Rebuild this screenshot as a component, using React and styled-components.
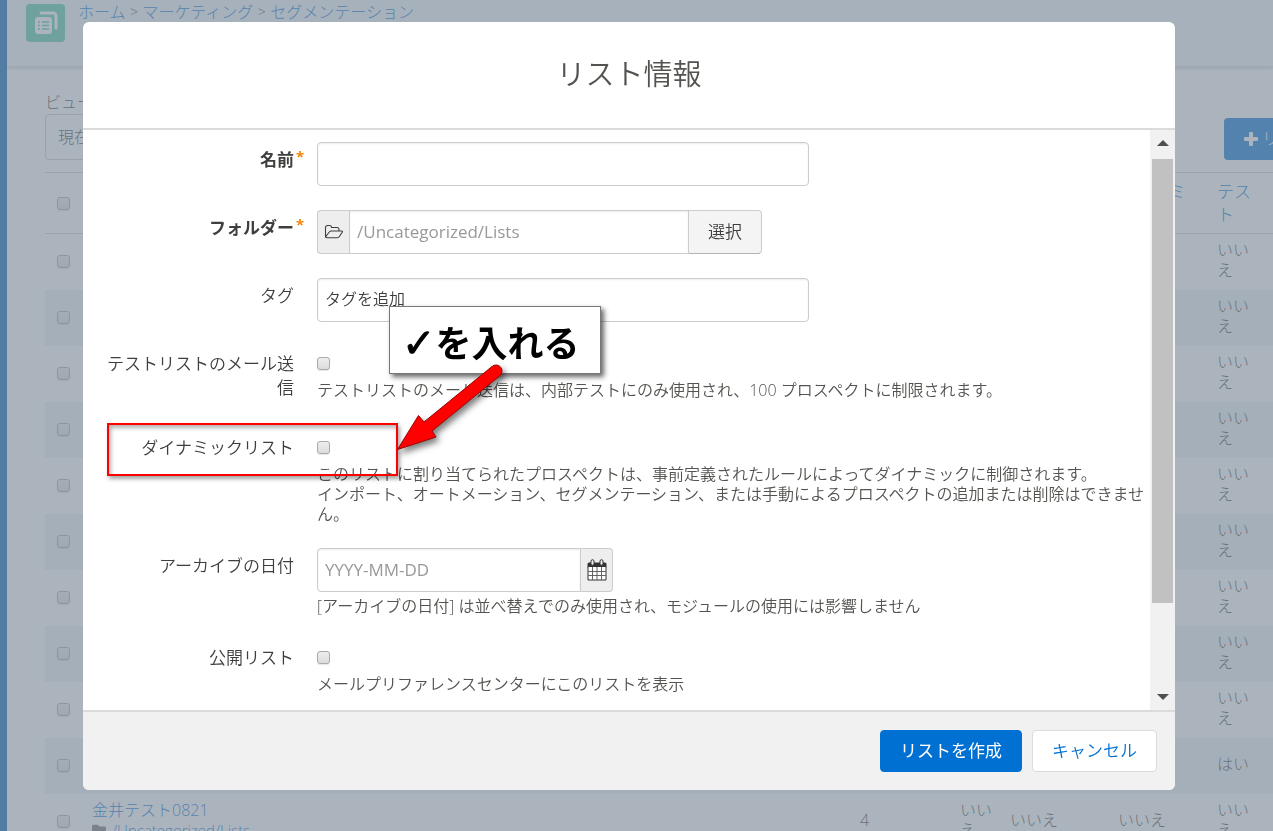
import React from 'react';
import styled, { createGlobalStyle } from 'styled-components';
import { FaFolder } from 'react-icons/fa';

const rows = [
  { test: 'いいえ' },
  { test: 'いいえ' },
  { test: 'いいえ' },
  { test: 'いいえ' },
  { test: 'いいえ' },
  { test: 'いいえ' },
  { test: 'いいえ' },
  { test: 'いいえ' },
  { test: 'いいえ' },
  { test: 'はい' },
  {
    name: '金井テスト0821',
    folder: '/Uncategorized/Lists',
    count: 4,
    crm: 'いいえ',
    open: 'いいえ',
    dynamic: 'いいえ',
    test: 'いいえ',
  },
];

const ListIcon = () => (
  <svg width="24" height="24" viewBox="0 0 24 24" aria-hidden="true">
    <path
      d="M7 2h12a3 3 0 0 1 3 3v12"
      fill="none"
      stroke="#fff"
      strokeWidth="3"
      strokeLinecap="round"
    />
    <rect x="1" y="6" width="17" height="17" rx="3" fill="#fff" />
    <path
      d="M4 11h2M4 14.5h2M4 18h2M8 11h7M8 14.5h7M8 18h7"
      stroke="#54c8a8"
      strokeWidth="1.6"
    />
  </svg>
);

const PlusIcon = () => (
  <svg width="14" height="14" viewBox="0 0 14 14" aria-hidden="true">
    <path
      d="M6 0h2a1 1 0 0 1 1 1v4h4a1 1 0 0 1 1 1v2a1 1 0 0 1-1 1H9v4a1 1 0 0 1-1 1H6a1 1 0 0 1-1-1V9H1a1 1 0 0 1-1-1V6a1 1 0 0 1 1-1h4V1a1 1 0 0 1 1-1z"
      fill="#fff"
    />
  </svg>
);

const FolderOpenIcon = () => (
  <svg width="20" height="16" viewBox="0 0 20 16" aria-hidden="true">
    <path
      d="M1.5 12.5v-9a2 2 0 0 1 2-2h2a2 2 0 0 1 2 2h5.5a2 2 0 0 1 2 2V7M1.5 13L5.3 8Q6 7 7.3 7H17.6Q19 7 18.2 8.2L15.2 12.7Q14.5 13.8 13 13.8H3Q1.5 13.8 1.5 12.5"
      fill="none"
      stroke="#3e3e3c"
      strokeWidth="1.1"
      strokeLinejoin="round"
    />
  </svg>
);

const CalendarIcon = () => (
  <svg width="20" height="22" viewBox="0 0 20 22" aria-hidden="true">
    <path d="M2 3.5h16a1.5 1.5 0 0 1 1.5 1.5v3.500h-19V5A1.500 1.500 0 0 1 2 3.500z" fill="#333" />
    <path d="M1 8v13h18V8" fill="#fff" stroke="#333" />
    <path
      d="M1 12.5h18M1 16.5h18M5.5 8v13M10 8v13M14.5 8v13"
      fill="none"
      stroke="#555"
      strokeWidth="0.9"
    />
    <rect x="4" y="0.7" width="3" height="5.5" rx="1.5" fill="#eee" stroke="#333" />
    <rect x="13" y="0.7" width="3" height="5.5" rx="1.5" fill="#eee" stroke="#333" />
  </svg>
);

const Field = ({ id, label, required, children }) => (
  <Row>
    <Label htmlFor={id} $bold={required}>
      {label}
    </Label>
    <Mark>{required && '*'}</Mark>
    <Control>{children}</Control>
  </Row>
);

const App = () => {
  return (
    <>
      <GlobalStyle />
      <Page>
        <SideBar />
        <Main>
          <PageHeader>
            <HeaderIcon>
              <ListIcon />
            </HeaderIcon>
            <Breadcrumb>
              <a href="#home">ホーム</a>
              <span>&gt;</span>
              <a href="#marketing">マーケティング</a>
              <span>&gt;</span>
              <a href="#segmentation">セグメンテーション</a>
            </Breadcrumb>
          </PageHeader>
          <Content>
            <Toolbar>
              <View>
                <label htmlFor="view">ビュー</label>
                <ViewSelect id="view">
                  <option>現在</option>
                </ViewSelect>
              </View>
              <ToolbarEnd>
                <AddButton type="button">
                  <PlusIcon />
                  リスト
                </AddButton>
              </ToolbarEnd>
            </Toolbar>
            <Table>
              <colgroup>
                <Col $w={47} />
                <col />
                <Col $w={100} />
                <Col $w={50} />
                <Col $w={108} />
                <Col $w={99} />
                <Col $w={56} />
              </colgroup>
              <thead>
                <tr>
                  <CheckCell as="th">
                    <Checkbox aria-label="すべて" />
                  </CheckCell>
                  <th />
                  <th />
                  <th />
                  <th />
                  <th>
                    ダイナミ
                    <br />
                    ック
                  </th>
                  <th>テスト</th>
                </tr>
              </thead>
              <tbody>
                {rows.map((row, i) => (
                  <tr key={i}>
                    <CheckCell>
                      <Checkbox aria-label="行" />
                    </CheckCell>
                    <td>
                      {row.name && <a href="#list">{row.name}</a>}
                      {row.folder && (
                        <FolderLine>
                          <FaFolder />
                          <a href="#folder">{row.folder}</a>
                        </FolderLine>
                      )}
                    </td>
                    <td>{row.count}</td>
                    <td>{row.crm}</td>
                    <td>{row.open}</td>
                    <td>{row.dynamic}</td>
                    <td>{row.test}</td>
                  </tr>
                ))}
              </tbody>
            </Table>
          </Content>
        </Main>
      </Page>

      <Backdrop>
        <Modal role="dialog" aria-labelledby="modal-title">
          <ModalHeader>
            <h2 id="modal-title">リスト情報</h2>
          </ModalHeader>
          <ModalBody>
            <Form>
              <Field id="name" label="名前" required>
                <TextInput id="name" />
              </Field>
              <Field id="folder" label="フォルダー" required>
                <InputGroup $w={445}>
                  <Addon>
                    <FolderOpenIcon />
                  </Addon>
                  <GroupInput id="folder" placeholder="/Uncategorized/Lists" />
                  <SelectButton type="button">選択</SelectButton>
                </InputGroup>
              </Field>
              <Field id="tags" label="タグ">
                <TextInput id="tags" placeholder="タグを追加" $dark />
              </Field>
              <Field id="test" label="テストリストのメール送信">
                <CheckLine>
                  <Checkbox id="test" />
                </CheckLine>
                <Help>
                  テストリストのメール送信は、内部テストにのみ使用され、100
                  プロスペクトに制限されます。
                </Help>
              </Field>
              <Field id="dynamic" label="ダイナミックリスト">
                <CheckLine>
                  <Checkbox id="dynamic" />
                </CheckLine>
                <Help>
                  このリストに割り当てられたプロスペクトは、事前定義されたルールによってダイナミックに制御されます。
                  <br />
                  インポート、オートメーション、セグメンテーション、または手動によるプロスペクトの追加または削除はできません。
                </Help>
              </Field>
              <Field id="archive" label="アーカイブの日付">
                <InputGroup $w={296}>
                  <GroupInput id="archive" placeholder="YYYY-MM-DD" $first />
                  <Addon $last>
                    <CalendarIcon />
                  </Addon>
                </InputGroup>
                <Help>
                  [アーカイブの日付] は並べ替えでのみ使用され、モジュールの使用には影響しません
                </Help>
              </Field>
              <Field id="public" label="公開リスト">
                <CheckLine>
                  <Checkbox id="public" />
                </CheckLine>
                <Help>メールプリファレンスセンターにこのリストを表示</Help>
              </Field>
            </Form>
            <ScrollTrack>
              <Arrow $up />
              <Thumb />
              <Arrow />
            </ScrollTrack>

            <Highlight />
            <Callout>
              <span>✓</span>を入れる
            </Callout>
            <ArrowDrawing width="130" height="100" viewBox="390 360 130 100" aria-hidden="true">
              <path
                d="M397.5 449.5L418.5 415.5L424 422L492 366.5A6 6 0 0 1 500 375.5L432 431L436 437z"
                fill="#f00"
                stroke="#900"
              />
            </ArrowDrawing>
          </ModalBody>
          <ModalFooter>
            <PrimaryButton type="button">リストを作成</PrimaryButton>
            <CancelButton type="button">キャンセル</CancelButton>
          </ModalFooter>
        </Modal>
      </Backdrop>
    </>
  );
};

const GlobalStyle = createGlobalStyle`
  * {
    box-sizing: border-box;
  }

  body {
    margin: 0;
    overflow: hidden;
    color: #3e3e3c;
    font-family: 'Open Sans', 'Noto Sans CJK JP', sans-serif;
    font-size: 17px;
    font-weight: 350;
    line-height: 24px;
  }

  button,
  input,
  select {
    font: inherit;
    color: inherit;
  }

  a {
    color: #0070d2;
    text-decoration: none;
  }
`;

const Page = styled.div`
  display: flex;
  height: 100vh;
  overflow: hidden;
  background: #fff;
  font-weight: 300;
`;

const SideBar = styled.div`
  flex: none;
  width: 7px;
  background: #005fb2;
`;

const Main = styled.main`
  flex: 1;
  min-width: 0;
`;

const PageHeader = styled.header`
  display: flex;
  gap: 13px;
  height: 67px;
  padding: 0 19px;
  background: #f4f6f9;
  border-bottom: 1px solid #dddbda;
  box-shadow: 0 2px 3px rgba(0, 0, 0, 0.15);
`;

const HeaderIcon = styled.div`
  display: grid;
  place-items: center;
  width: 39px;
  height: 38px;
  margin-top: 4px;
  border-radius: 4px;
  background: #54c8a8;
`;

const Breadcrumb = styled.nav`
  display: flex;
  font-size: 16px;

  span {
    width: 17px;
    font-size: 14px;
    text-align: center;
  }
`;

const Content = styled.div`
  padding: 23px 0 0 38px;
`;

const Toolbar = styled.div`
  display: flex;
  justify-content: space-between;
  align-items: flex-end;
  margin-bottom: 12px;
`;

const View = styled.div`
  display: flex;
  flex-direction: column;
  font-size: 16px;
`;

const ViewSelect = styled.select`
  appearance: none;
  width: 240px;
  height: 46px;
  padding: 0 12px;
  border: 1px solid #c9c7c5;
  border-radius: 4px;
  background: #fff;
`;

const ToolbarEnd = styled.div`
  flex: none;
  width: 49px;
  overflow: hidden;
`;

const AddButton = styled.button`
  display: flex;
  align-items: center;
  gap: 4px;
  height: 42px;
  padding: 0 20px;
  border: 0;
  border-radius: 4px;
  background: #0070d2;
  color: #fff;
  white-space: nowrap;
`;

const Col = styled.col`
  width: ${({ $w }) => $w}px;
`;

const Table = styled.table`
  width: 100%;
  table-layout: fixed;
  border-collapse: collapse;

  th,
  td {
    padding: 0 14px 0 0;
    text-align: left;
    vertical-align: middle;
    font-weight: 300;
  }

  th {
    height: 61px;
    border-top: 1px solid #d0d0d0;
    border-bottom: 1px solid #d0d0d0;
    color: #0070d2;
    line-height: 23px;
  }

  td {
    height: 56px;
    padding-bottom: 3px;
    font-size: 16px;
    line-height: 20px;
  }

  td:nth-child(2) {
    padding: 0 0 3px;
  }

  tbody tr:nth-child(even) {
    background: #eef1f6;
  }
`;

const CheckCell = styled.td`
  && {
    padding-bottom: 0;
    padding-left: 12px;
    line-height: 0;
  }
`;

const FolderLine = styled.div`
  display: flex;
  align-items: center;
  gap: 6px;
  font-size: 15px;

  svg {
    color: #706e6b;
    font-size: 14px;
  }
`;

const Checkbox = styled.input.attrs({ type: 'checkbox' })`
  appearance: none;
  width: 13px;
  height: 13px;
  margin: 0;
  border: 1px solid #a9a9a9;
  border-radius: 3px;
  background: linear-gradient(#eee, #dcdcdc);
  box-shadow: 0 1px 1px rgba(0, 0, 0, 0.1);
`;

const Backdrop = styled.div`
  position: fixed;
  inset: 0;
  display: flex;
  padding: 22px 98px 41px 83px;
  background: rgba(126, 140, 153, 0.65);
`;

const Modal = styled.div`
  display: flex;
  flex: 1;
  flex-direction: column;
  min-width: 0;
  overflow: hidden;
  border-radius: 6px;
  background: #fff;
`;

const ModalHeader = styled.div`
  padding: 31px 16px 33px;
  border-bottom: 2px solid #dddbda;
  text-align: center;

  h2 {
    margin: 0;
    color: #54534f;
    font-size: 29px;
    font-weight: 350;
    line-height: 42px;
  }
`;

const ModalBody = styled.div`
  position: relative;
  display: flex;
  flex: 1;
  min-height: 0;
`;

const Form = styled.form`
  display: flex;
  flex: 1;
  flex-direction: column;
  gap: 24px;
  min-width: 0;
  padding: 12px 0 0 23px;
  overflow: hidden;
`;

const Row = styled.div`
  display: grid;
  grid-template-columns: 188px 23px minmax(0, 1fr);
`;

const Label = styled.label`
  padding: 6px 0;
  text-align: right;
  font-weight: ${({ $bold }) => ($bold ? 700 : 350)};
`;

const Mark = styled.span`
  padding: 2px 0 0 2px;
  color: #f38303;
  font-size: 15px;
  font-weight: 700;
`;

const Control = styled.div`
  min-width: 0;
`;

const TextInput = styled.input`
  display: block;
  width: 492px;
  max-width: 100%;
  height: 44px;
  padding: 0 7px 2px;
  border: 1px solid #ccc;
  border-radius: 4px;
  box-shadow: inset 0 1px 2px rgba(0, 0, 0, 0.08);
  font-size: 16px;

  &::placeholder {
    color: ${({ $dark }) => ($dark ? '#3e3e3c' : '#999')};
    opacity: 1;
  }
`;

const InputGroup = styled.div`
  display: flex;
  width: ${({ $w }) => $w}px;
  max-width: 100%;
  height: 44px;
`;

const GroupInput = styled.input`
  flex: 1;
  min-width: 0;
  padding: 0 7px;
  border: 1px solid #ccc;
  border-radius: ${({ $first }) => ($first ? '4px 0 0 4px' : '0')};
  box-shadow: inset 0 1px 2px rgba(0, 0, 0, 0.08);
  font-weight: 400;

  &::placeholder {
    color: #999;
    opacity: 1;
  }
`;

const Addon = styled.span`
  display: grid;
  place-items: center;
  width: 32px;
  border: 1px solid #ccc;
  border-width: ${({ $last }) => ($last ? '1px 1px 1px 0' : '1px 0 1px 1px')};
  border-radius: ${({ $last }) => ($last ? '0 4px 4px 0' : '4px 0 0 4px')};
  background: #eee;
`;

const SelectButton = styled.button`
  padding: 0 19px;
  border: 1px solid #ccc;
  border-left: 0;
  border-bottom-color: #b3b3b3;
  border-radius: 0 4px 4px 0;
  background: #f4f4f4;
`;

const CheckLine = styled.div`
  display: flex;
  align-items: center;
  height: 30px;
  padding-top: 5px;
`;

const Help = styled.p`
  margin: 4px 0 0;
  color: #54534f;
  font-size: 16px;
  line-height: 20px;
`;

const ScrollTrack = styled.div`
  display: flex;
  flex: none;
  flex-direction: column;
  width: 25px;
  background: #f1f1f1;
`;

const Arrow = styled.div`
  display: grid;
  place-items: center;
  height: 26px;

  &::before {
    content: '';
    border: 6px solid transparent;
    border-top: ${({ $up }) => ($up ? '0' : '6px solid #505050')};
    border-bottom: ${({ $up }) => ($up ? '6px solid #505050' : '0')};
  }
`;

const Thumb = styled.div`
  flex: 0 0 444px;
  margin: 3px 2px auto;
  background: #c1c1c1;
`;

const Highlight = styled.div`
  position: absolute;
  top: 293px;
  left: 24px;
  width: 291px;
  height: 53px;
  border: 2px solid #f00;
  box-shadow: 2px 3px 4px rgba(0, 0, 0, 0.35), inset 2px 3px 4px rgba(0, 0, 0, 0.3);
`;

const Callout = styled.div`
  position: absolute;
  top: 176px;
  left: 306px;
  width: 212px;
  height: 68px;
  padding: 12px 0 0 12px;
  border: 1px solid #777;
  background: #fff;
  box-shadow: 3px 3px 5px rgba(0, 0, 0, 0.6);
  color: #000;
  font-size: 36px;
  font-weight: 700;
  line-height: 48px;
  white-space: nowrap;

  span {
    font-family: 'DejaVu Sans', sans-serif;
    font-size: 40px;
    -webkit-text-stroke: 1px #000;
  }
`;

const ArrowDrawing = styled.svg`
  position: absolute;
  top: 230px;
  left: 307px;
  filter: drop-shadow(3px 4px 3px rgba(0, 0, 0, 0.5));
`;

const ModalFooter = styled.div`
  display: flex;
  justify-content: flex-end;
  gap: 10px;
  padding: 18px;
  border-top: 2px solid #dddbda;
  background: #f1f1f1;
`;

const PrimaryButton = styled.button`
  height: 42px;
  padding: 0 19px;
  border: 1px solid #0070d2;
  border-radius: 4px;
  background: #0070d2;
  color: #fff;
  font-weight: 400;
`;

const CancelButton = styled(PrimaryButton)`
  border-color: #dddbda;
  background: #fff;
  color: #0070d2;
  font-weight: 350;
`;

export default App;
